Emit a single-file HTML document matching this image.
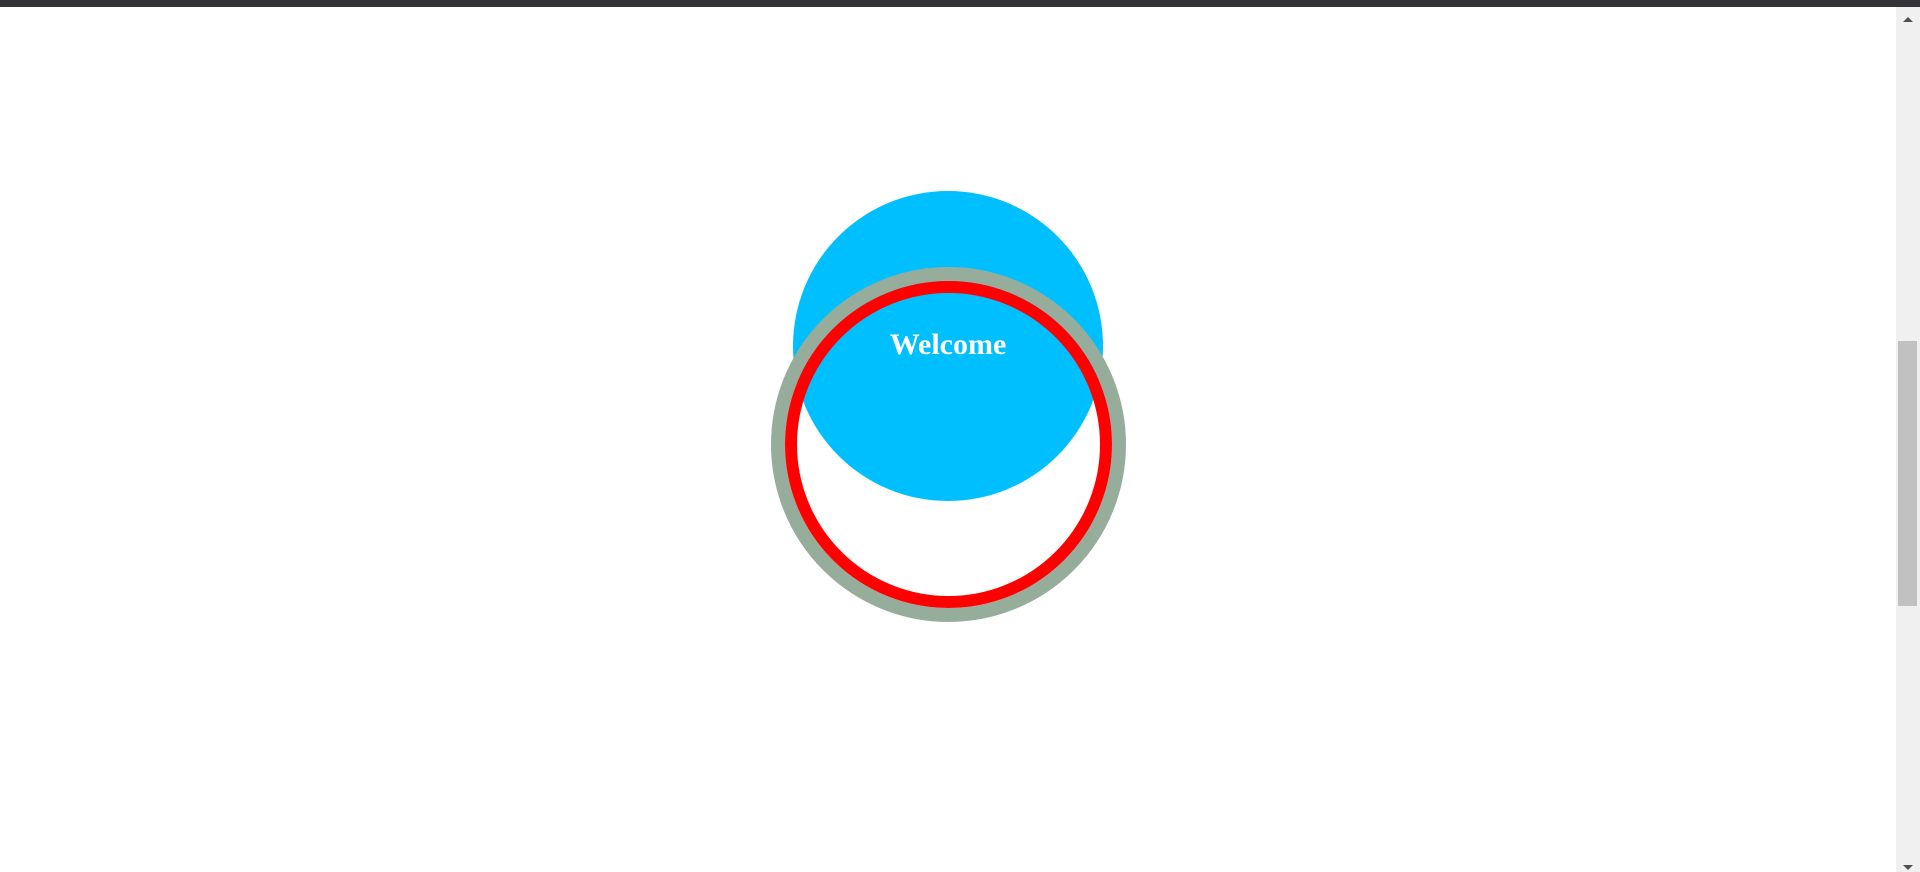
<!DOCTYPE html>
<html><head><meta charset="utf-8"><style>
html,body{margin:0;padding:0;width:1920px;height:872px;overflow:hidden;background:#fff;position:relative}
.top{position:absolute;left:0;top:0;width:1920px;height:7px;background:#333337}
.sb{position:absolute;left:1896px;top:7px;width:24px;height:865px;background:#f0f0f0}
.thumb{position:absolute;left:1898px;top:341px;width:19px;height:265px;background:#c1c1c1}
.blue{position:absolute;left:793px;top:191px;width:310px;height:310px;border-radius:50%;background:#00bfff}
.ring{position:absolute;left:770.5px;top:267px;width:355px;height:355px;border-radius:50%;background:transparent;box-sizing:border-box;border:14px solid #97ad9c}
.ring2{position:absolute;left:784.5px;top:281px;width:327px;height:327px;border-radius:50%;box-sizing:border-box;border:12px solid #ff0000}
.txt{position:absolute;left:748px;width:400px;top:328px;text-align:center;font:bold 30px "Liberation Serif",serif;color:#fff}
</style></head><body>
<div class="top"></div>
<div class="blue"></div>
<div class="ring"></div>
<div class="ring2"></div>
<div class="txt">Welcome</div>
<div class="sb"></div>
<div class="thumb"></div>
<svg style="position:absolute;left:1902px;top:14px" width="12" height="10"><polygon points="1,8 6,3 11,8" fill="#505050"/></svg>
<svg style="position:absolute;left:1902px;top:863px" width="12" height="9"><polygon points="1,2 6,7 11,2" fill="#505050"/></svg>
</body></html>
